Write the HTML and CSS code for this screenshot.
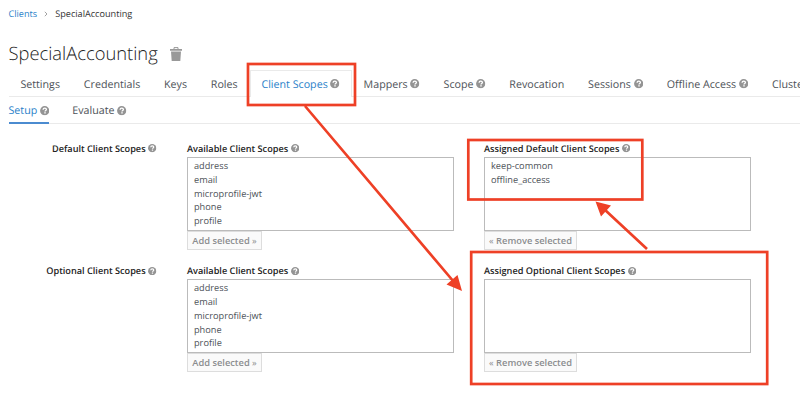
FILE: index.html
```
<!DOCTYPE html>
<html lang="en">
<head>
<meta charset="utf-8">
<title>SpecialAccounting</title>
<link rel="stylesheet" href="styles.css">
</head>
<body>
<svg class="defs" width="0" height="0">
  <symbol id="help" viewBox="0 0 12 12">
    <circle cx="6" cy="6" r="5.9" fill="#949494"/>
    <path d="M3.9 4.700C4 3.300 4.900 2.700 6.100 2.700c1.200 0 2.100.7 2.100 1.700 0 1.200-1.800 1.300-1.800 2.500" fill="none" stroke="#fff" stroke-width="1.700"/>
    <rect x="5.500" y="7.900" width="1.800" height="1.700" fill="#fff"/>
  </symbol>
</svg>
<nav class="breadcrumb"><a>Clients</a><svg class="chev" viewBox="0 0 4 6"><path d="M.8.800 3 3 .8 5.200"/></svg><span>SpecialAccounting</span></nav>
<header class="title"><h1>SpecialAccounting</h1>
  <svg class="trash" viewBox="0 0 12 14"><path d="M4 2V.600h4V2" fill="none" stroke="#999"/><path d="M0 2h12v1.700H0zM1 4.500h10L10.300 14H1.700z" fill="#999"/></svg>
</header>
<ul class="tabs">
  <li>Settings</li><li>Credentials</li><li>Keys</li><li>Roles</li>
  <li class="active">Client Scopes<svg class="help"><use href="#help"/></svg></li>
  <li>Mappers<svg class="help"><use href="#help"/></svg></li>
  <li>Scope<svg class="help"><use href="#help"/></svg></li>
  <li>Revocation</li>
  <li>Sessions<svg class="help"><use href="#help"/></svg></li>
  <li>Offline Access<svg class="help"><use href="#help"/></svg></li>
  <li>Clustering</li>
</ul>
<ul class="subtabs">
  <li class="active">Setup<svg class="help"><use href="#help"/></svg></li>
  <li>Evaluate<svg class="help"><use href="#help"/></svg></li>
</ul>
<main class="form">
  <section class="group">
    <div class="label name">Default Client Scopes<svg class="help"><use href="#help"/></svg></div>
    <div class="col">
      <div class="label">Available Client Scopes<svg class="help"><use href="#help"/></svg></div>
      <ul class="list"><li>address</li><li>email</li><li>microprofile-jwt</li><li>phone</li><li>profile</li></ul>
      <button class="add">Add selected <i>»</i></button>
    </div>
    <div class="col">
      <div class="label">Assigned Default Client Scopes<svg class="help"><use href="#help"/></svg></div>
      <ul class="list"><li>keep-common</li><li>offline_access</li></ul>
      <button class="remove"><i>«</i> Remove selected</button>
    </div>
  </section>
  <section class="group">
    <div class="label name">Optional Client Scopes<svg class="help"><use href="#help"/></svg></div>
    <div class="col">
      <div class="label">Available Client Scopes<svg class="help"><use href="#help"/></svg></div>
      <ul class="list"><li>address</li><li>email</li><li>microprofile-jwt</li><li>phone</li><li>profile</li></ul>
      <button class="add">Add selected <i>»</i></button>
    </div>
    <div class="col">
      <div class="label">Assigned Optional Client Scopes<svg class="help"><use href="#help"/></svg></div>
      <ul class="list"></ul>
      <button class="remove"><i>«</i> Remove selected</button>
    </div>
  </section>
</main>
<svg class="annotations" viewBox="0 0 800 406">
  <g fill="none" stroke="#ee4026" stroke-width="2.700">
    <rect x="248" y="64" width="107" height="41"/>
    <rect x="468.300" y="140" width="174" height="59.500"/>
    <rect x="471.200" y="252" width="296" height="132"/>
    <path d="M305 106 454 282M647 249 604 209"/>
  </g>
  <path fill="#ee4026" d="M462 291 446.500 284.500 457.500 275zM595.500 201.500 611 205.500 601 216.500z"/>
</svg>
</body>
</html>
```
FILE: styles.css
```
* { box-sizing: border-box; }
body { margin: 0; width: 800px; height: 406px; overflow: hidden; position: relative; background: #fff; font-family: "Open Sans", sans-serif; color: #4d5258; text-rendering: geometricPrecision; }
ul { list-style: none; margin: 0; padding: 0; }
.defs { position: absolute; }
.breadcrumb { display: flex; align-items: center; height: 27px; padding-left: 8.5px; font-size: 9.15px; color: #333; }
.breadcrumb a { color: #2a7fc9; }
.chev { width: 4px; height: 6px; margin: 0 7px; fill: none; stroke: #999; stroke-width: .9; }
.title { display: flex; align-items: center; height: 45px; padding: 8px 0 0 8.5px; }
h1 { margin: 0; font-size: 18.35px; font-weight: 300; line-height: 26px; color: #222; }
.trash { width: 12px; height: 14px; margin-left: 12px; }
.help { width: 9.4px; height: 9.4px; margin-left: 2.7px; flex: none; }
.tabs { display: flex; height: 25px; margin-left: 8.5px; border-bottom: 1px solid #eaeaea; font-size: 10.7px; white-space: nowrap; }
.tabs li { display: flex; align-items: center; flex: none; height: 24px; padding: 1px 11.9px 0; line-height: 24px; }
.tabs .help { margin-bottom: 1px; }
.tabs .active { color: #2a7fc9; background: #fff; border: 1px solid #eaeaea; border-bottom: 0; margin-top: -2px; height: 27px; padding: 1px 10.9px 0; }
.subtabs { display: flex; height: 27px; margin-left: 8.5px; border-bottom: 1px solid #eaeaea; font-size: 10.7px; }
.subtabs li { display: flex; align-items: center; height: 27px; margin-right: 23px; padding-top: 1px; }
.subtabs .active { color: #2a7fc9; border-bottom: 2px solid #4b8bd0; padding: 3px 0 0; }
.form { padding-top: 18px; }
.group { display: grid; grid-template-columns: 156.5px 266.5px 266.5px; column-gap: 30.5px; height: 122.3px; }
.label { display: flex; align-items: center; height: 13px; font-size: 9.17px; font-weight: 600; color: #222; white-space: nowrap; }
.label .help { width: 8.4px; height: 8.4px; margin-left: 2.5px; }
.name { justify-content: flex-end; }
.list { height: 74px; margin-top: 2px; padding: 1px 0 0 6px; border: 1px solid #bbb; font-size: 9.2px; line-height: 13.75px; }
button { display: block; height: 19px; padding: 0; border: 1px solid #ddd; background: #fafafa; font: 600 9.3px/17px "Open Sans", sans-serif; color: #8b8d8f; text-align: center; white-space: nowrap; }
button i { font-style: normal; font-weight: 400; }
.add { width: 75px; }
.remove { width: 93px; }
.annotations { position: absolute; inset: 0; width: 800px; height: 406px; }
```
